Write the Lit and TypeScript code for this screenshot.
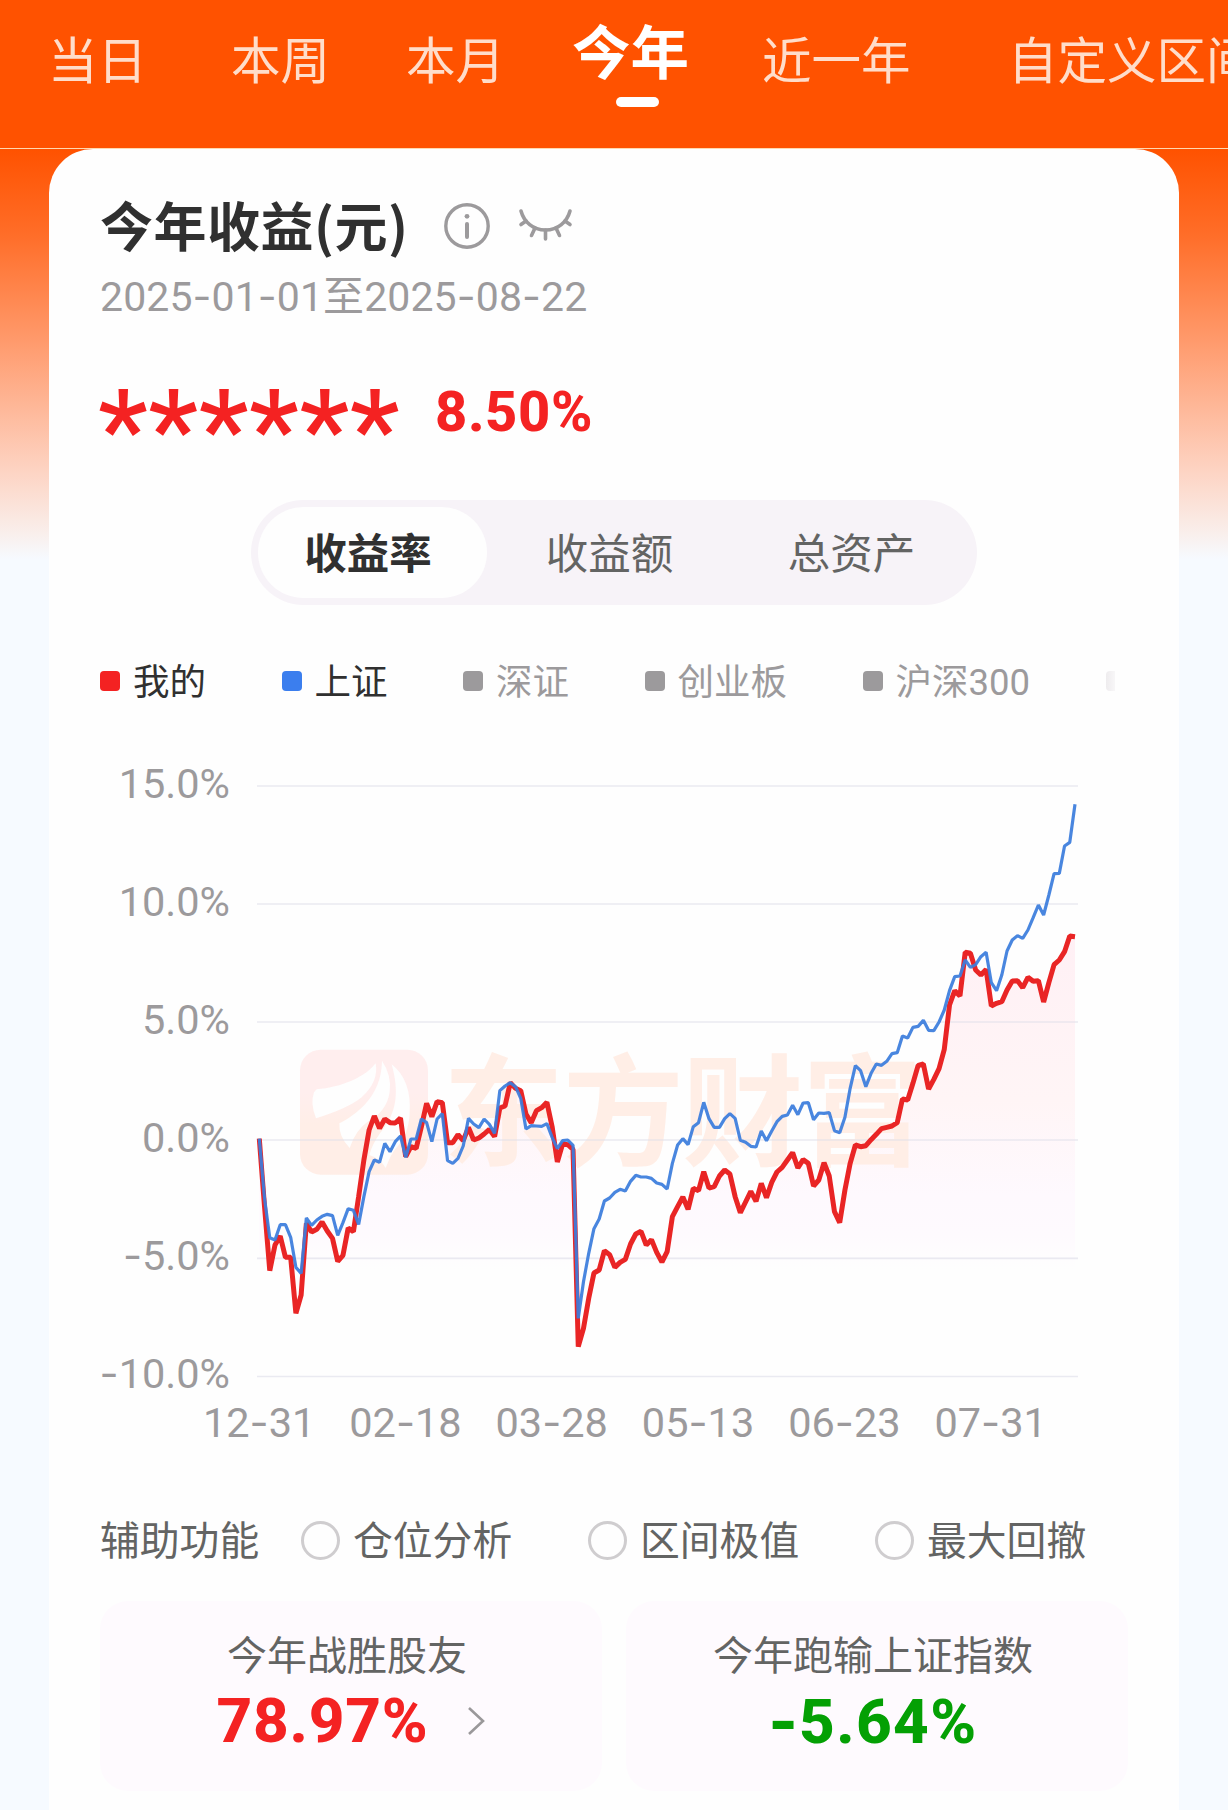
import { LitElement, html, svg, css } from "lit";
import { customElement, property } from "lit/decorators.js";
import { classMap } from "lit/directives/class-map.js";

/* Vertical plot units: 0 is the 0.0% line, 354 units are five percent, downwards positive. */
const MINE = [
  -4, 200, 392, 315, 288, 352, 352, 520, 465, 250, 276, 268, 246, 273, 295, 364, 346, 264, 275, 170, 60, -30, -72, -35,
  -63, -52, -51, -66, 50, 20, 25, -40, -110, -70, -115, -112, 8, 8, -16, 2, -38, 0, -6, -18, -32, -10, -96, -102, -172,
  -155, -148, -78, -52, -88, -97, -113, -40, 66, 12, 14, 28, 620, 565, 475, 399, 390, 332, 344, 382, 367, 358, 312, 282,
  274, 315, 299, 337, 366, 335, 230, 200, 171, 208, 145, 152, 95, 144, 140, 108, 90, 102, 170, 218, 186, 154, 184, 130,
  173, 127, 96, 82, 60, 38, 84, 59, 70, 138, 120, 68, 108, 215, 248, 150, 70, 15, 20, 17, -1, -17, -34, -38, -42, -52,
  -123, -120, -170, -224, -228, -153, -182, -214, -272, -405, -448, -432, -563, -560, -510, -495, -512, -402, -410,
  -415, -450, -477, -478, -457, -488, -476, -478, -414, -472, -526, -540, -565, -612, -610,
];
const INDEX = [
  -4, 175, 293, 300, 254, 254, 292, 382, 400, 234, 256, 240, 229, 223, 227, 286, 248, 206, 211, 253, 170, 95, 60, 67,
  10, 35, 5, -12, 52, -3, -3, -63, -52, 5, -63, -79, 62, 70, 55, 18, -65, -48, -37, -63, -47, -20, -148, -162, -172,
  -160, -125, -33, -43, -42, -41, -49, -8, 26, 2, 0, 16, 535, 425, 340, 266, 237, 183, 174, 157, 148, 153, 124, 106,
  111, 111, 115, 129, 133, 147, 70, 15, -4, 14, -40, -52, -113, -64, -38, -38, -64, -79, -65, 1, 7, 19, 21, -27, 2,
  -27, -55, -71, -75, -104, -76, -111, -112, -61, -81, -80, -82, -28, -22, -68, -155, -223, -208, -160, -200, -228,
  -224, -236, -259, -262, -312, -306, -338, -341, -359, -329, -328, -354, -390, -448, -490, -492, -540, -518, -526,
  -550, -563, -472, -448, -495, -567, -600, -613, -605, -630, -667, -705, -675, -735, -799, -800, -882, -893, -1007,
];

const X0 = 2.3;
const STEP = 815.7 / 3 / 52;
const ZERO = 370;

const points = (series: number[]) =>
  series.map((v, i) => `${(X0 + i * STEP).toFixed(2)},${(ZERO + v / 3).toFixed(2)}`).join(" ");

/* Hyphens take the wider face so that dates and signed values keep an open rhythm. */
const wideHyphens = (text: string) =>
  text.split(/(-)/).map((part) => (part === "-" ? html`<span class="hy">-</span>` : part));

const hyphenStyle = css`
  .hy { font-family: Inter, sans-serif; }
`;

@customElement("period-tabs")
class PeriodTabs extends LitElement {
  static styles = css`
    :host { display: block; height: 148px; background: #ff5200; border-bottom: 1px solid #ffd9b0; overflow: hidden; }
    .tabs { display: flex; align-items: flex-start; width: 1300px; padding: 25px 0 0 48px; }
    .tab { height: 74px; line-height: 74px; font-size: 49.5px; color: #ffddca; white-space: nowrap; }
    .day { width: 183px; }
    .week { width: 175px; }
    .month { width: 166px; }
    .now { width: 190px; }
    .year { width: 246px; }
    .on { margin-top: -8px; font-size: 58.5px; font-weight: 700; color: #fff; height: 83px; }
    .on .mark { display: block; width: 43px; height: 10px; border-radius: 5px; background: #fff; margin: 6px 0 0 44px; }
    .on .label { display: block; height: 74px; }
  `;
  render() {
    const tabs = [
      ["day", "当日"], ["week", "本周"], ["month", "本月"], ["now", "今年"], ["year", "近一年"], ["custom", "自定义区间"],
    ];
    return html`<div class="tabs">
      ${tabs.map(([key, label]) => html`<div class=${classMap({ tab: true, [key]: true, on: key === "now" })}>
        <span class="label">${label}</span>${key === "now" ? html`<i class="mark"></i>` : ""}
      </div>`)}
    </div>`;
  }
}

@customElement("return-chart")
class ReturnChart extends LitElement {
  static styles = [hyphenStyle, css`
    :host { display: block; color: #9c9a9c; font-size: 41.5px; }
    .body { display: flex; }
    .scale { width: 130px; height: 640px; display: flex; flex-direction: column; justify-content: space-between; }
    .scale > span { height: 50px; line-height: 53px; white-space: nowrap; align-self: flex-end; }
    .plot { display: block; width: 821px; height: 620px; margin: 13px 0 0 27px; flex: none; overflow: visible; }
    .dates { display: grid; grid-template-columns: repeat(6, 146.3px); margin: 0 0 1px 86px; text-align: center; line-height: 50px; }
    .brand { font-size: 121px; font-weight: 700; }
  `];
  render() {
    const mine = points(MINE);
    const endX = X0 + (MINE.length - 1) * STEP;
    return html`
      <div class="body">
        <div class="scale">
          ${["15.0%", "10.0%", "5.0%", "0.0%", "-5.0%", "-10.0%"].map((t) => html`<span>${wideHyphens(t)}</span>`)}
        </div>
        <svg class="plot" viewBox="0 0 821 620">
          <defs>
            <linearGradient id="fill" gradientUnits="userSpaceOnUse" x1="0" y1="160" x2="0" y2="500">
              <stop offset="0" stop-color="#fff0f5" />
              <stop offset="0.5" stop-color="#fff5f6" />
              <stop offset="0.78" stop-color="#fef9fe" />
              <stop offset="0.9" stop-color="#fefafe" />
              <stop offset="1" stop-color="#fefefe" />
            </linearGradient>
            <linearGradient id="logo" x1="0" y1="0" x2="0" y2="1">
              <stop offset="0.35" stop-color="#ffeeee" />
              <stop offset="0.6" stop-color="#ffeee7" />
            </linearGradient>
          </defs>
          <polygon points="${X0},500 ${mine} ${endX},500" fill="url(#fill)" />
          <g transform="translate(33 270) scale(0.33333)">
            <rect x="30" y="29" width="384" height="375" rx="62" fill="url(#logo)" />
            <g fill="#fefefe">
              <path d="M80 148C155 142 225 112 257 70Q267 125 215 172Q175 205 78 235Q60 190 72 157Z" />
              <path d="M276 62Q305 105 299 155C293 200 268 225 235 244Q197 270 179 324Q146 291 148 250C190 228 275 175 276 62Z" />
              <path d="M305 73Q365 120 359 220Q356 285 318 325Q304 340 287 384Q270 355 238 345Q248 310 270 280C325 215 326 150 305 73Z" />
            </g>
          </g>
          <text class="brand" x="186" y="386" textLength="480" fill="#ffeee6">东方财富</text>
          ${[16, 134, 252, 370, 488.3, 606.5].map((y) => svg`<line x1="0" x2="821" y1=${y} y2=${y} stroke="#dcdce8" stroke-opacity="0.6" stroke-width="1.7" />`)}
          <polyline points=${mine} fill="none" stroke="#e92525" stroke-width="5" stroke-linejoin="bevel" />
          <polyline points=${points(INDEX)} fill="none" stroke="#3b7ddd" stroke-opacity="0.93" stroke-width="3.2" stroke-linejoin="bevel" />
        </svg>
      </div>
      <div class="dates">
        ${["12-31", "02-18", "03-28", "05-13", "06-23", "07-31"].map((t) => html`<span>${wideHyphens(t)}</span>`)}
      </div>
    `;
  }
}

@customElement("stat-tile")
class StatTile extends LitElement {
  @property() label = "";
  @property() value = "";
  @property() tone = "up";
  @property({ type: Boolean }) link = false;
  static styles = [hyphenStyle, css`
    :host { display: block; width: 502px; height: 190px; border-radius: 28px; background: #fefafe; text-align: center; }
    .label { height: 60px; line-height: 60px; padding: 26px 8px 0 0; font-size: 40px; color: #636463; }
    .row { display: flex; justify-content: center; align-items: center; height: 74px; margin-top: -3px; gap: 37px; }
    .value { font-size: 62px; font-weight: 800; letter-spacing: 0.8px; line-height: 74px; }
    .up { color: #f42222; }
    .down { color: #04a004; padding-right: 8px; letter-spacing: 1.4px; }
    .go { width: 20px; height: 32px; flex: none; }
  `];
  render() {
    return html`
      <div class="label">${this.label}</div>
      <div class="row">
        <span class=${classMap({ value: true, [this.tone]: true })}>${wideHyphens(this.value)}</span>
        ${this.link
          ? html`<svg class="go" viewBox="0 0 20 32"><path d="M3 3L17 16L3 29" fill="none" stroke="#9a989a" stroke-width="2.6" /></svg>`
          : ""}
      </div>
    `;
  }
}

@customElement("app-root")
class AppRoot extends LitElement {
  static styles = [hyphenStyle, css`
    :host { display: block; width: 1228px; height: 1810px; overflow: hidden; background: #f6faff; font-family: Roboto, "Noto Sans CJK SC", sans-serif; }
    .page { height: 1661px; padding: 0 49px; background: linear-gradient(#ff5200 0, #ff6d28 85px, #ff9a6c 192px, #fdd5c5 325px, #f9efec 385px, #f6faff 410px); }
    .card { box-sizing: border-box; height: 1661px; border-radius: 44px 44px 0 0; background: #fefefe; padding: 43px 51px 0; overflow: hidden; }
    .title-row { display: flex; align-items: center; height: 68px; }
    .title { font-size: 53px; font-weight: 700; line-height: 68px; margin-top: -4px; color: #303030; width: 341px; flex: none; letter-spacing: 0.5px; font-family: "Noto Sans CJK SC", sans-serif; white-space: nowrap; }
    .info { width: 52px; height: 52px; }
    .eye { width: 60px; height: 40px; margin-left: 22px; }
    .range { height: 56px; line-height: 55px; margin-top: 9px; font-size: 41px; letter-spacing: 0.1px; color: #9c9a9c; white-space: nowrap; }
    .total { display: flex; align-items: center; height: 80px; margin-top: 46px; color: #f42222; font-weight: 700; }
    .stars { box-sizing: border-box; width: 296px; margin: 0 41px 0 -2px; height: 80px; line-height: 80px; padding-top: 19px; font-size: 112px; font-weight: 500; letter-spacing: 0.7px; white-space: nowrap; flex: none; }
    .pct { font-size: 56px; font-weight: 800; letter-spacing: 0.6px; padding-top: 2px; }
    .seg { display: grid; grid-template-columns: repeat(3, 242px); box-sizing: border-box; width: 726px; height: 105px; margin: 49px 0 0 151px; border-radius: 53px; background: #f7f3f8; font-size: 42.5px; line-height: 109px; color: #636463; text-align: center; }
    .seg span { padding-right: 9px; }
    .seg .on { margin: 7px 6px 7px 7px; height: 91px; line-height: 95px; border-radius: 46px; background: #fefefe; color: #303030; font-weight: 700; }
    .legend { display: flex; height: 60px; margin-top: 46px; width: 1015px; overflow: hidden; font-size: 36.5px; color: #9c9a9c; white-space: nowrap; }
    .item { display: flex; align-items: center; flex: none; gap: 13px; width: 181.5px; }
    .item span { line-height: 56px; padding-top: 4px; }
    .item.w3 { width: 218px; }
    .item.w4 { width: 243px; }
    .sq { width: 20px; height: 20px; border-radius: 4px; background: #9c9a9c; flex: none; }
    .item.on { color: #303030; }
    .mine .sq { background: #f42222; }
    .sse .sq { background: #3b7eee; }
    .more .sq { background: linear-gradient(90deg, #eeecee, #fbfafb 60%); }
    return-chart { margin-top: 46px; }
    .aux { display: flex; height: 60px; align-items: center; margin-top: 62px; font-size: 39.8px; color: #636463; white-space: nowrap; }
    .aux span { line-height: 56px; }
    .aux .lead { width: 201px; flex: none; padding-top: 4px; }
    .opt { display: flex; align-items: center; width: 287px; gap: 13px; flex: none; }
    .opt span { padding-top: 4px; }
    .ring { box-sizing: border-box; width: 39px; height: 39px; border: 3px solid #cfcdcf; border-radius: 50%; flex: none; }
    .tiles { display: flex; gap: 24px; margin-top: 31px; }
    .tiles stat-tile { flex: none; }
  `];
  render() {
    const legend = [
      ["我的", "on mine"], ["上证", "on sse"], ["深证", ""], ["创业板", "w3"], ["沪深300", "w4"], ["", "more"],
    ];
    return html`
      <period-tabs></period-tabs>
      <div class="page">
        <div class="card">
          <div class="title-row">
            <span class="title">今年收益(元)</span>
            <svg class="info" viewBox="0 0 52 52" fill="none" stroke="#9c9a9c">
              <circle cx="26" cy="26" r="21.2" stroke-width="3.4" />
              <circle cx="26" cy="16.3" r="2.4" fill="#9c9a9c" stroke="none" />
              <path d="M26 24V37" stroke-width="4" stroke-linecap="round" />
            </svg>
            <svg class="eye" viewBox="0 0 60 40" fill="none" stroke="#9c9a9c" stroke-width="3.6" stroke-linecap="round">
              <path d="M6 5C9 16 18 24 30.5 24S52 16 55 5" />
              <path d="M11 15L6 18.5M20 22L16.5 29.5M30.5 24V33M41 22L44.5 29.5M50 15L55 18.5" />
            </svg>
          </div>
          <div class="range">${wideHyphens("2025-01-01至2025-08-22")}</div>
          <div class="total"><span class="stars">******</span><span class="pct">8.50%</span></div>
          <div class="seg"><span class="on">收益率</span><span>收益额</span><span>总资产</span></div>
          <div class="legend">
            ${legend.map(([label, cls]) => html`<div class="item ${cls}"><i class="sq"></i><span>${label}</span></div>`)}
          </div>
          <return-chart></return-chart>
          <div class="aux">
            <span class="lead">辅助功能</span>
            ${["仓位分析", "区间极值", "最大回撤"].map((t) => html`<div class="opt"><i class="ring"></i><span>${t}</span></div>`)}
          </div>
          <div class="tiles">
            <stat-tile label="今年战胜股友" value="78.97%" tone="up" link></stat-tile>
            <stat-tile label="今年跑输上证指数" value="-5.64%" tone="down"></stat-tile>
          </div>
        </div>
      </div>
    `;
  }
}
